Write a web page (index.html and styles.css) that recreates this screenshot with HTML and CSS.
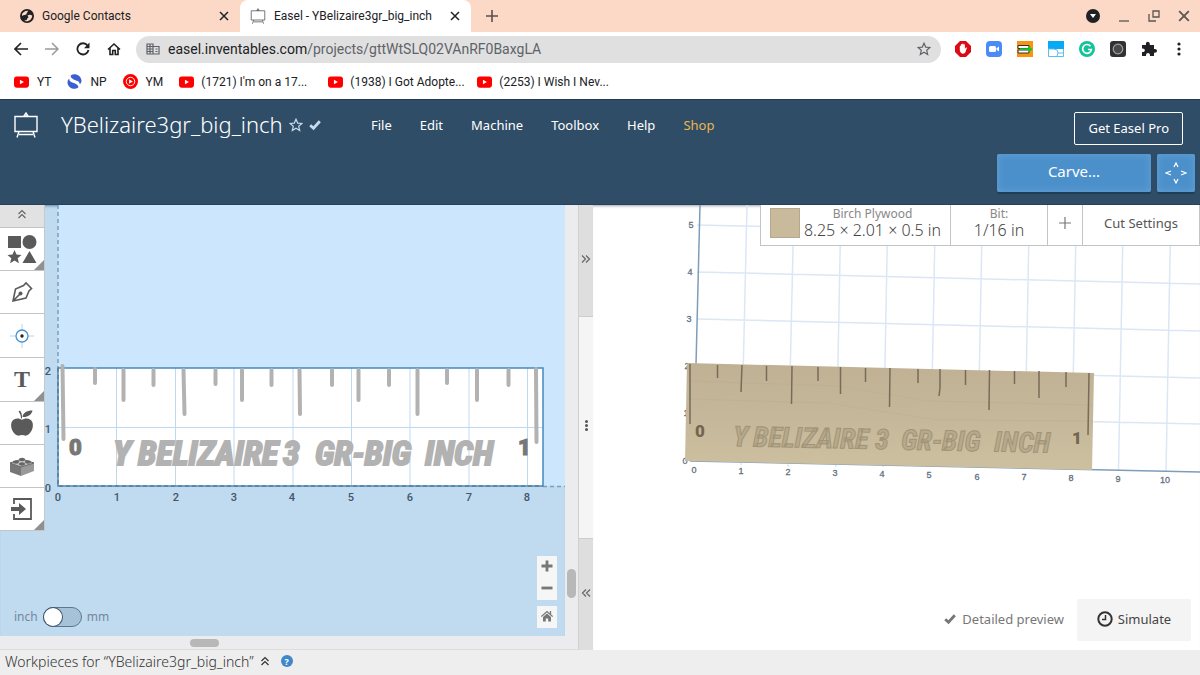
FILE: index.html
```html
<!DOCTYPE html>
<html lang="en">
<head>
<meta charset="utf-8">
<title>Easel - YBelizaire3gr_big_inch</title>
<link rel="stylesheet" href="styles.css">
</head>
<body>
<svg width="0" height="0" class="defs" aria-hidden="true">
  <symbol id="yt" viewBox="0 0 16 12"><rect width="16" height="12" rx="3" fill="#f00"/><path d="M6.300 3.500v5L10.600 6z" fill="#fff"/></symbol>
  <symbol id="close" viewBox="0 0 10 10"><path d="M1 1l8 8M9 1l-8 8" fill="none" stroke="currentColor" stroke-width="1.500"/></symbol>
  <symbol id="star" viewBox="0 0 14 14"><path d="M7 1.200l1.700 3.900 4.200.4-3.200 2.800 1 4.200L7 10.300l-3.700 2.200 1-4.200L1.100 5.500l4.200-.4z" fill="none" stroke="currentColor" stroke-width="1.200"/></symbol>
  <symbol id="easel" viewBox="0 0 26 26"><path d="M2 4.500h22v15H2zM6 22.500h14M6 19.500L4 25.500M20 19.500l2 6M11 4l2-3 2 3z" fill="none" stroke="currentColor" stroke-width="1.400"/></symbol>
  <symbol id="check" viewBox="0 0 12 10"><path d="M1.200 5.200l3.300 3 6.300-7" fill="none" stroke="currentColor" stroke-width="2.800"/></symbol>
  <symbol id="chevrons" viewBox="0 0 10 10"><path d="M1.500 5L5 1.500 8.500 5M1.500 9L5 5.500 8.500 9" fill="none" stroke="currentColor" stroke-width="1.200"/></symbol>
</svg>

<div class="tabs">
  <div class="tab">
    <svg class="i14" viewBox="0 0 14 14"><circle cx="7" cy="7" r="7" fill="#202124"/><path d="M2 5c2-3 4-3.500 6-3.300-.2 1.600-1.500 1.800-1.400 3.300C6 6.500 3.500 5.500 2 7zM7.500 6.500c1.500-1 3.500-1 4.800.2-.3 3-2.300 5-4.800 5.500-1.600.1-2.700-.2-3-1 2 .4 2.600-.4 2.600-1.700 1.300-.5 1.900-1 .4-3z" fill="#fbd9c7"/></svg>
    <span class="tab-name">Google Contacts</span>
    <button class="bare" aria-label="Close tab"><svg class="i10"><use href="#close"/></svg></button>
  </div>
  <div class="tab active">
    <svg class="i16 grey"><use href="#easel"/></svg>
    <span class="tab-name">Easel - YBelizaire3gr_big_inch</span>
    <button class="bare" aria-label="Close tab"><svg class="i10"><use href="#close"/></svg></button>
  </div>
  <button class="bare new-tab" aria-label="New tab"><svg class="i12" viewBox="0 0 12 12"><path d="M6 0v12M0 6h12" stroke="#5a4f4a" stroke-width="1.600"/></svg></button>
  <div class="window-buttons">
    <button class="bare" aria-label="Search tabs"><svg class="i14" viewBox="0 0 14 14"><circle cx="7" cy="7" r="7" fill="#202124"/><path d="M4 5h6L7 9z" fill="#fff"/></svg></button>
    <button class="bare" aria-label="Minimize"><svg class="i12" viewBox="0 0 12 12"><path d="M1 11h10" stroke="#5a5552" stroke-width="1.300"/></svg></button>
    <button class="bare" aria-label="Restore"><svg class="i12" viewBox="0 0 12 12"><path d="M5 1h6v6H5zM1 4v7h7" fill="none" stroke="#5a5552" stroke-width="1.300"/></svg></button>
    <button class="bare soft" aria-label="Close window"><svg class="i12"><use href="#close"/></svg></button>
  </div>
</div>

<div class="toolbar">
  <button class="bare" aria-label="Back"><svg class="i14" viewBox="0 0 14 14"><path d="M14 7H1.500M7 1L1 7l6 6" fill="none" stroke="#202124" stroke-width="1.600"/></svg></button>
  <button class="bare" aria-label="Forward"><svg class="i14" viewBox="0 0 14 14"><path d="M0 7h12.500M7 1l6 6-6 6" fill="none" stroke="#9a9a9a" stroke-width="1.500"/></svg></button>
  <button class="bare" aria-label="Reload"><svg class="i14" viewBox="0 0 14 14"><path d="M12.500 8A5.600 5.600 0 1 1 11.500 3.500" fill="none" stroke="#202124" stroke-width="1.800"/><path d="M13.500.5v5.700H8z" fill="#202124"/></svg></button>
  <button class="bare" aria-label="Home"><svg class="i14" viewBox="0 0 14 14"><path d="M1 7.500L7 2l6 5.500M3 6v6.500h2.700V8.500h2.600v4H11V6" fill="none" stroke="#202124" stroke-width="1.600"/></svg></button>
  <div class="address">
    <svg class="i14" viewBox="0 0 14 14"><path d="M1 2h6v10H1zM7 4.500h6V12H7M1 4.500h6M1 7h6M1 9.500h6M4 2v10M9.500 7h2M9.500 9.500h2" fill="none" stroke="#5f6368" stroke-width="1.200"/></svg>
    <span class="url">easel.inventables.com<span>/projects/gttWtSLQ02VAnRF0BaxgLA</span></span>
    <button class="bare grey" aria-label="Bookmark"><svg class="i14"><use href="#star"/></svg></button>
  </div>
  <div class="extensions">
    <svg class="i16" viewBox="0 0 16 16"><path d="M5 0h6l5 5v6l-5 5H5l-5-5V5z" fill="#dc0a12"/><path d="M4.800 9V5.200c.1-.8 1.100-.8 1.200 0V3.600c.2-.8 1.200-.8 1.300 0V3c.2-.8 1.200-.8 1.300 0v.7c.2-.7 1.200-.7 1.300 0V8c.8-1.500 1.600-1.700 2-1L10.500 11c-1 2.500-5.300 2.500-5.700-2z" fill="#fff"/></svg>
    <svg class="i16" viewBox="0 0 16 16"><rect width="16" height="16" rx="4" fill="#4a8cf7"/><rect x="3" y="5" width="7" height="6" rx="1.500" fill="#fff"/><path d="M10.500 7.300L13 5.500v5l-2.500-1.800z" fill="#fff"/></svg>
    <svg class="i16" viewBox="0 0 16 16"><path d="M0 0h16v16H0z" fill="#f79410"/><path d="M1 4.500h11v3H1zM1 9h11v3H1z" fill="#fff" stroke="#333"/><path d="M3 7.300h8V5l5 3.200-5 3.300V9H3z" fill="#19c22d"/></svg>
    <svg class="i16" viewBox="0 0 16 16"><path d="M.5.5h15v15H.5z" fill="#fff" stroke="#5fbdf0"/><path d="M0 0h16v8H0z" fill="#09a9f4"/><path d="M0 8h6l3 1 1 3h5M10 12l-1 3" fill="none" stroke="#5fbdf0"/></svg>
    <svg class="i16" viewBox="0 0 16 16"><circle cx="8" cy="8" r="8" fill="#15c39a"/><path d="M11.500 5.200A4.400 4.400 0 1 0 12.400 8.500H9" fill="none" stroke="#fff" stroke-width="1.700"/></svg>
    <svg class="i16" viewBox="0 0 16 16"><rect width="16" height="16" rx="3" fill="#303134"/><circle cx="8" cy="8" r="4.800" fill="#48494b" stroke="#a0a0a0" stroke-width="1.200"/></svg>
    <svg class="i16" viewBox="0 0 16 16"><path d="M1 4h4c-1-4.500 4.500-4.500 3.800 0H13v4c4-.8 4 4.500 0 3.800V15H9c.5-4-4.500-4-4 0H1v-4c3.800.5 3.800-4 0-3.500z" fill="#202124"/></svg>
    <button class="bare" aria-label="Menu"><svg class="i14" viewBox="0 0 14 14"><g fill="#202124"><circle cx="7" cy="2" r="1.600"/><circle cx="7" cy="7" r="1.600"/><circle cx="7" cy="12" r="1.600"/></g></svg></button>
  </div>
</div>

<nav class="bookmarks">
  <a href="#"><svg class="yt"><use href="#yt"/></svg>YT</a>
  <a href="#"><svg class="i15" viewBox="0 0 16 16"><path d="M4 1.500C8-1.500 15 1 15.500 7c0 2-1 3.500-2 4C14 7.500 10 7 7.500 6 5 5 3.500 3.500 4 1.500z" fill="#3b5fcf"/><path d="M12 14.500C8 17.500 1 15 .5 9c0-2 1-3.500 2-4C2 8.500 6 9 8.500 10c2.500 1 4 2.500 3.500 4.500z" fill="#3b5fcf"/></svg>NP</a>
  <a href="#"><svg class="i15" viewBox="0 0 16 16"><circle cx="8" cy="8" r="8" fill="#f00"/><circle cx="8" cy="8" r="4.500" fill="none" stroke="#fff"/><path d="M6.500 5.500v5L10.500 8z" fill="#fff"/></svg>YM</a>
  <a class="long" href="#"><svg class="yt"><use href="#yt"/></svg>(1721) I'm on a 17...</a>
  <a class="long" href="#"><svg class="yt"><use href="#yt"/></svg>(1938) I Got Adopte...</a>
  <a class="long" href="#"><svg class="yt"><use href="#yt"/></svg>(2253) I Wish I Nev...</a>
</nav>

<header class="header">
  <svg class="logo"><use href="#easel"/></svg>
  <div class="project">
    <h1>YBelizaire3gr_big_inch</h1>
    <button class="bare pale" aria-label="Favorite"><svg class="i14"><use href="#star"/></svg></button>
    <svg class="i12 pale"><use href="#check"/></svg>
  </div>
  <nav class="menu">
    <a href="#">File</a><a href="#">Edit</a><a href="#">Machine</a><a href="#">Toolbox</a><a href="#">Help</a><a class="shop" href="#">Shop</a>
  </nav>
  <div class="actions">
    <button class="pro">Get Easel Pro</button>
    <div class="carve-row">
      <button class="blue carve">Carve...</button>
      <button class="blue jog" aria-label="Jog machine"><svg class="i22" viewBox="0 0 22 22"><path d="M9 5l2-4 2 4M9 17l2 4 2-4M6 9l-5 2 5 2M16 9l5 2-5 2" fill="none" stroke="#fff" stroke-width="1.200"/></svg></button>
    </div>
  </div>
</header>

<main class="workspace">
  <section class="design">
    <div class="canvas">
      <svg class="scene" viewBox="0 205 565 431" preserveAspectRatio="xMinYMin slice">
        <path d="M58 205h507v281H58z" fill="#cce6fd"/>
        <path d="M58 205v163M543 486.500h22" stroke="#79a0bd" stroke-width="1.500" stroke-dasharray="4 3"/>
        <path d="M58 368h485v118H58z" fill="#fff"/>
        <path d="M116.500 368v118M175.500 368v118M234 368v118M293 368v118M351.500 368v118M410 368v118M469 368v118M527.500 368v118M58 427.500h485" stroke="#c0d8ec"/>
        <path d="M58 368h485v118H58z" fill="none" stroke="#4389bf" stroke-width="1.500"/>
        <path d="M58 368v118h485" fill="none" stroke="#5b7d98" stroke-width="1.500" stroke-dasharray="4 3"/>
        <path d="M62.500 366l1 73M95 369v14M123.500 370v30M153.500 370v15M183.500 370l1 44M215.500 370v14M242 370v30M271.500 370v15M299.500 370l.5 44M332 370v15M358.500 370v30M389 370v15M417.500 370v44M447 370v13M477 370v30M508.500 370v15M536 369l.5 73" stroke="#b2b2b2" stroke-width="4" stroke-linecap="round"/>
        <g class="engraving">
          <text x="113" y="465">Y</text><text x="138" y="465">BELIZAIRE</text><text x="283" y="465">3</text><text x="315" y="465">GR-BIG</text><text x="425" y="465">INCH</text>
        </g>
        <g class="numeral"><text x="69" y="455">0</text><text x="518" y="455">1</text></g>
        <g class="axis">
          <text x="58" y="501">0</text><text x="117" y="501">1</text><text x="176" y="501">2</text><text x="234" y="501">3</text><text x="292" y="501">4</text><text x="351" y="501">5</text><text x="410" y="501">6</text><text x="469" y="501">7</text><text x="527" y="501">8</text>
          <text x="48" y="375">2</text><text x="48" y="433">1</text><text x="48" y="492">0</text>
        </g>
      </svg>
      <div class="tools">
        <button class="fold" aria-label="Collapse tools"><svg class="i10"><use href="#chevrons"/></svg></button>
        <button class="more" aria-label="Shapes"><svg class="i30" viewBox="0 0 30 30"><path d="M1 2h13v12H1zM22.500 17L29.500 29h-14zM7.500 16l2 4.500 5 .5-3.800 3.200 1.200 5L7.500 26.500l-4.400 2.700 1.200-5L.5 21l5-.5z"/><circle cx="22.500" cy="8" r="7"/></svg></button>
        <button aria-label="Pen"><svg class="i22" viewBox="0 0 22 22"><path d="M2 20L4.500 8l8-3.500L15 2l5.500 5.500L18 10l-3 7zM2 20l7-7" fill="none" stroke="#5a5a5a" stroke-width="1.600"/><circle cx="9.500" cy="12.500" r="2"/></svg></button>
        <button aria-label="Drill"><svg class="i24" viewBox="0 0 24 24"><path d="M12 0v24M0 12h24" stroke="#b4d4ee"/><circle cx="12" cy="12" r="6" fill="#fff" stroke="#4a90cc" stroke-width="1.300"/><circle cx="12" cy="12" r="1.700" fill="#222"/></svg></button>
        <button class="more type" aria-label="Text">T</button>
        <button aria-label="Icons"><svg class="i26" viewBox="0 0 26 26"><path d="M13 10c3-2.500 9-2 10.500 2.500 1.500 5-1.500 11.500-6 13-1.500.5-3-.5-4.500-.5s-3 1-4.500.5C4 24 1 17.500 2.500 12.500 4 8 10 7.500 13 10zM12 8.500C12 5 11 3.500 9.500 1.500l1.500-1c1.500 2 2.200 4 2 8zM13.500 7c.5-4 4-6.500 10-6.500C22.500 5 18.500 7.500 13.500 7z"/></svg></button>
        <button aria-label="Apps"><svg class="i26" viewBox="0 0 26 22"><path d="M1 8l11 4v9L1 17z" fill="#777"/><path d="M12 12l13-4v8l-13 5z" fill="#999"/><path d="M1 8l12-4 12 4-13 4z" fill="#c5c5c5" stroke="#666"/><g fill="#666"><ellipse cx="7" cy="7" rx="3" ry="1.700"/><ellipse cx="13" cy="4.500" rx="3" ry="1.700"/><ellipse cx="13" cy="9" rx="3" ry="1.700"/><ellipse cx="19" cy="7" rx="3" ry="1.700"/></g></svg></button>
        <button class="more" aria-label="Import"><svg class="i24" viewBox="0 0 24 24"><path d="M4 7V2h17v20H4v-5" fill="none" stroke="#5a5a5a" stroke-width="1.800"/><path d="M1 10h8V6l7 6-7 6v-4H1z"/></svg></button>
      </div>
      <label class="units"><span>inch</span><input type="checkbox" role="switch"><span>mm</span></label>
      <div class="zoom">
        <div class="zoom-group">
          <button aria-label="Zoom in"><svg class="i12" viewBox="0 0 12 12"><path d="M6 .5v11M.5 6h11" stroke="#777" stroke-width="2.800"/></svg></button>
          <button aria-label="Zoom out"><svg class="i12" viewBox="0 0 12 12"><path d="M.5 6h11" stroke="#777" stroke-width="2.800"/></svg></button>
        </div>
        <button aria-label="Reset view"><svg class="i12" viewBox="0 0 12 12"><path d="M2 7l4-3.500L10 7v4.500H7.200v-3H4.800v3H2z" fill="#777"/><path d="M.3 6.500L6 1.500l5.700 5M9.500 1v3" fill="none" stroke="#777" stroke-width="1.300"/></svg></button>
      </div>
    </div>
    <div class="bar-v"><i></i></div>
    <div class="bar-h"><i></i></div>
  </section>

  <div class="splitter">
    <button aria-label="Expand design"><svg class="i10 right"><use href="#chevrons"/></svg></button>
    <div class="grip"><i></i><i></i><i></i></div>
    <button aria-label="Expand preview"><svg class="i10 left"><use href="#chevrons"/></svg></button>
  </div>

  <section class="preview">
    <svg class="scene" viewBox="593 205 607 445" preserveAspectRatio="xMinYMin slice">
      <defs>
        <linearGradient id="wood" x1="0" y1="0" x2="0" y2="1"><stop offset="0" stop-color="#c0b195"/><stop offset=".5" stop-color="#c5b79a"/><stop offset="1" stop-color="#cdc09f"/></linearGradient>
      </defs>
      <path d="M747 205l-6 260M794 205l-6 262M841 205l-5 262M888 205l-5 262M935.500 205l-5 262M982.500 205l-5 262M1029.500 205l-5 262M1076.500 205l-5 262M1123.500 205l-5 265M1171 205l-5 267M697 225l503 12M697 272l503 12M697 319l503 12M697 366l503 12M697 413l503 11" stroke="#dce7f5" stroke-width="1.500"/>
      <path d="M700 205l-4 160M690 461l510 11" stroke="#7f9cbb" stroke-width="1.500"/>
      <g class="axis small">
        <text x="694" y="473">0</text><text x="741" y="474">1</text><text x="788" y="475">2</text><text x="835" y="476">3</text><text x="882" y="477">4</text><text x="929" y="478">5</text><text x="977" y="480">6</text><text x="1024" y="480">7</text><text x="1071" y="481">8</text><text x="1118" y="482">9</text><text x="1165" y="483">10</text>
        <text x="691" y="228">5</text><text x="690" y="275">4</text><text x="689" y="322">3</text><text x="687" y="369">2</text><text x="686" y="416">1</text><text x="685" y="464">0</text>
      </g>
      <path d="M687 363l407 10-2 97-407-9z" fill="url(#wood)"/>
      <path d="M688 381l150 5 90 15 165 4M688 399l140 4 110 17 154 1" fill="none" stroke="#bcae90" stroke-width="1" opacity=".5"/>
      <path d="M690 364v60M717.500 365v13M742 365l-1 27M766.500 366v15M792 366l-.5 38M818 367v14M840.500 367v27M865.500 368v14M890 368l-.5 39M918 369v14M940 369v19l-1 8M965.500 370v15M989.500 370l-.5 40M1014.500 371v13M1039 371v27M1066 372v15M1089 373l-1 62" fill="none" stroke="#776c58" stroke-width="1.500"/>
      <g class="carved-word" transform="rotate(1.200 733 446)">
        <text x="733" y="446">Y</text><text x="753" y="446">BELIZAIRE</text><text x="875" y="446">3</text><text x="901" y="446">GR-BIG</text><text x="994" y="446">INCH</text>
      </g>
      <g class="carved-num"><text x="695" y="437">0</text><text x="1072" y="444">1</text></g>
    </svg>
    <div class="settings">
      <button class="material"><i class="swatch"></i><span><small>Birch Plywood</small>8.25 × 2.01 × 0.5 in</span></button>
      <button class="bit"><span><small>Bit:</small>1/16 in</span></button>
      <button class="add" aria-label="Add bit"><svg class="i12" viewBox="0 0 12 12"><path d="M6 0v12M0 6h12" stroke="#777" stroke-width="1.200"/></svg></button>
      <button class="cut">Cut Settings</button>
    </div>
    <div class="run">
      <span class="detail"><svg class="i12"><use href="#check"/></svg>Detailed preview</span>
      <button class="simulate"><svg class="i16" viewBox="0 0 16 16"><circle cx="8" cy="8" r="6.700" fill="none" stroke="#333" stroke-width="2"/><path d="M8.500 4v4.500H5" fill="none" stroke="#333" stroke-width="1.500"/></svg>Simulate</button>
    </div>
  </section>
</main>

<footer class="footer">
  <span>Workpieces for “YBelizaire3gr_big_inch”</span>
  <button class="bare" aria-label="Show workpieces"><svg class="i10"><use href="#chevrons"/></svg></button>
  <button class="help" aria-label="Help">?</button>
</footer>
</body>
</html>
```
FILE: styles.css
```css
* { box-sizing: border-box; }
body { margin: 0; min-height: 100vh; display: flex; flex-direction: column; background: #fff; font-family: "Noto Sans", "Open Sans", sans-serif; color: #555; }
button { font: inherit; color: inherit; cursor: pointer; }
a { color: inherit; text-decoration: none; }
svg { display: block; flex: none; fill: #5a5a5a; }
.defs { position: absolute; }
.bare { display: flex; padding: 0; border: 0; background: none; }
.i10 { width: 10px; height: 10px; }
.i12 { width: 12px; height: 12px; }
.i14 { width: 14px; height: 14px; }
.i15 { width: 15px; height: 15px; }
.i16 { width: 16px; height: 16px; }
.i22 { width: 22px; height: 22px; }
.i24 { width: 24px; height: 24px; }
.i26 { width: 26px; height: 26px; }
.i30 { width: 30px; height: 30px; }
.grey { color: #5f6368; }
.pale { color: #c5dbed; }

/* Browser frame */
.tabs, .toolbar, .bookmarks { font-family: Roboto, sans-serif; color: #202124; font-size: 12px; display: flex; align-items: center; }
.tabs { height: 32px; background: #fcd9c6; }
.tab { display: flex; align-items: center; gap: 8px; width: 240px; height: 32px; padding: 0 11px 0 20px; }
.tab.active { width: 231px; padding-left: 10px; background: #fff; border-radius: 8px 8px 0 0; }
.tab-name { flex: 1; white-space: nowrap; }
.new-tab { margin-left: 15px; }
.window-buttons { display: flex; align-items: center; gap: 18px; margin-left: auto; padding-right: 10px; }
.soft { color: #5a5552; }
.toolbar { height: 34px; gap: 17px; padding: 0 14px; }
.address { flex: 1; display: flex; align-items: center; gap: 8px; height: 27px; padding: 0 10px; margin-left: -2px; border-radius: 14px; background: #e0e0e0; }
.url { flex: 1; font-size: 14px; }
.url span { color: #5f6368; }
.extensions { display: flex; align-items: center; gap: 15px; margin-left: -3px; }
.bookmarks { height: 33px; padding: 0 14px 2px; gap: 16px; }
.bookmarks a { display: flex; align-items: center; gap: 8px; white-space: nowrap; }
.bookmarks .long { width: 133px; gap: 7px; }
.yt { width: 15px; height: 12px; }

/* Application header */
.header { display: flex; align-items: flex-start; min-height: 106px; padding: 12px 5px 12px 13px; background: #2f4d67; border-top: 1px solid #1d3b56; border-bottom: 1px solid #26425a; color: #fff; }
.logo { width: 26px; height: 26px; margin-right: 22px; }
.project { display: flex; align-items: center; gap: 6px; width: 310px; height: 26px; }
.project h1 { margin: 0; padding-bottom: 2px; font-size: 22px; font-weight: 300; line-height: 26px; }
.menu { display: flex; gap: 28px; font-size: 13px; line-height: 26px; }
.shop { color: #eab64d; }
.actions { display: flex; flex-direction: column; align-items: flex-end; gap: 9px; margin-left: auto; }
.pro { height: 33px; margin-right: 12px; padding: 0 13px 2px; border: 1px solid #fff; border-radius: 2px; background: none; color: #fff; font-size: 13px; }
.carve-row { display: flex; gap: 6px; }
.blue { display: flex; align-items: center; justify-content: center; height: 38px; border: 0; border-radius: 2px; background: #4b90cb; color: #fff; box-shadow: inset 0 0 8px #66a0d4, 0 2px 1px #1f3d56; }
.carve { width: 154px; padding-bottom: 6px; font-size: 15px; }
.jog { width: 38px; padding: 0; }

/* Design canvas */
.workspace { flex: 1; display: flex; min-height: 445px; }
.design { flex: 578; display: grid; grid-template-columns: 1fr 13px; grid-template-rows: 1fr 14px; background: #ececef; }
.canvas { position: relative; overflow: hidden; background: #c0daf0; box-shadow: inset 0 3px 3px -2px #6684a0; }
.scene { position: absolute; inset: 0; width: 100%; height: 100%; }
.tools { position: relative; width: 45px; background: #fff; border-right: 1px solid #c4c9cd; }
.tools button { position: relative; display: flex; align-items: center; justify-content: center; width: 100%; height: 43px; padding: 0; border: 0; border-bottom: 1px solid #c4c4c4; background: #fff; }
.tools .fold { height: 23px; padding-bottom: 4px; background: #e2e2e2; color: #666; }
.tools button:nth-child(n+4) { height: 44px; }
.tools button:nth-child(n+6) { height: 43px; }
.tools .more::after { content: ""; position: absolute; right: 0; bottom: 0; border: 5px solid; border-color: transparent #909090 #909090 transparent; }
.tools .type { font: bold 24px "Liberation Serif", serif; color: #5a5a5a; }
.engraving { font: italic 700 34px "Roboto Condensed", Roboto, sans-serif; fill: #b2b2b2; stroke: #b2b2b2; stroke-width: 2; }
.numeral { font: 900 22px Roboto, sans-serif; fill: #777; stroke: #777; }
.axis { font: 500 11px Roboto, sans-serif; fill: #40566a; text-anchor: middle; }
.axis.small { font: 9px "Liberation Sans", sans-serif; fill: #5f7183; stroke: #5f7183; stroke-width: .3; }
.units { position: absolute; left: 14px; bottom: 9px; display: flex; align-items: center; gap: 5px; font-size: 12px; line-height: 20px; color: #74889a; }
.units input { appearance: none; width: 39px; height: 20px; margin: 0; border: 1px solid #5c7890; border-radius: 10px; background: #a5c2d8; }
.units input::before { content: ""; display: block; width: 18px; height: 18px; border-radius: 50%; background: #fff; box-shadow: 0 0 0 1px #41566a; }
.zoom { position: absolute; right: 8px; bottom: 8px; display: grid; gap: 6px; }
.zoom-group { display: grid; background: #f6f6f6; }
.zoom button { display: flex; align-items: center; justify-content: center; width: 20px; height: 22px; padding: 0 0 3px; border: 0; background: #f6f6f6; }
.bar-v { display: flex; align-items: flex-end; justify-content: center; padding-bottom: 38px; }
.bar-v i { width: 9px; height: 29px; border-radius: 5px; background: #b8b8b8; }
.bar-h { grid-column: 1 / 3; padding: 3px 0 0 190px; border-bottom: 1px solid #ddd; }
.bar-h i { display: block; width: 29px; height: 8px; border-radius: 4px; background: #b8b8b8; }

.splitter { display: flex; flex-direction: column; width: 15px; background: #dedede; border-left: 1px solid #d0d0d0; }
.splitter button { flex: 1; display: flex; align-items: center; justify-content: center; padding: 0 0 3px; border: 0; background: none; color: #666; }
.right { transform: rotate(90deg); }
.left { transform: rotate(-90deg); }
.grip { flex: 2; display: flex; flex-direction: column; align-items: center; justify-content: center; gap: 1px; padding-bottom: 4px; background: #f5f5f5; border: solid #ccc; border-width: 1px 0; }
.grip i { width: 3px; height: 3px; border-radius: 50%; background: #555; }

/* Carve preview */
.preview { position: relative; flex: 607; min-width: 0; overflow: hidden; background: #fff; box-shadow: inset 0 3px 3px -2px #a0a5aa; }
.carved-word { font: italic 700 28px "Roboto Condensed", Roboto, sans-serif; fill: #b7a98a; stroke: #a09478; stroke-width: 1; }
.carved-num { font: 900 17px Roboto, sans-serif; fill: #71664f; }
.settings { position: absolute; top: 0; right: 0; display: flex; height: 41px; background: #fff; border: 1px solid #c4c4c4; border-top: 0; }
.settings button { display: flex; align-items: center; justify-content: center; padding: 0 0 4px; border: 0; border-right: 1px solid #c4c4c4; background: none; font-size: 16px; font-weight: 300; line-height: 18px; color: #444; }
.settings button:last-child { border: 0; }
.settings small { display: block; font-size: 12px; font-weight: 400; line-height: 14px; color: #888; }
.settings .material { width: 190px; gap: 4px; white-space: nowrap; }
.settings .bit { width: 97px; }
.settings .add { width: 35px; }
.settings .cut { width: 116px; font-size: 13px; font-weight: 400; color: #555; }
.swatch { width: 30px; height: 30px; border: 1px solid #b5a88d; background: #c8ba9b; }
.run { position: absolute; right: 9px; bottom: 9px; display: flex; align-items: center; gap: 13px; font-size: 13px; }
.detail { display: flex; align-items: center; gap: 6px; padding-bottom: 2px; color: #777; }
.simulate { display: flex; align-items: center; justify-content: center; gap: 5px; width: 114px; height: 42px; padding: 0 0 2px; border: 0; border-radius: 2px; background: #f4f4f4; color: #444; font-size: 13px; }

.footer { display: flex; align-items: center; gap: 6px; height: 25px; padding: 0 5px 3px; background: #eee; font-size: 14px; font-weight: 300; color: #333; }
.help { display: flex; align-items: center; justify-content: center; width: 12px; height: 12px; margin-left: 5px; padding: 0; border: 0; border-radius: 50%; background: #3f87c8; color: #fff; font-size: 9px; font-weight: bold; }
```
